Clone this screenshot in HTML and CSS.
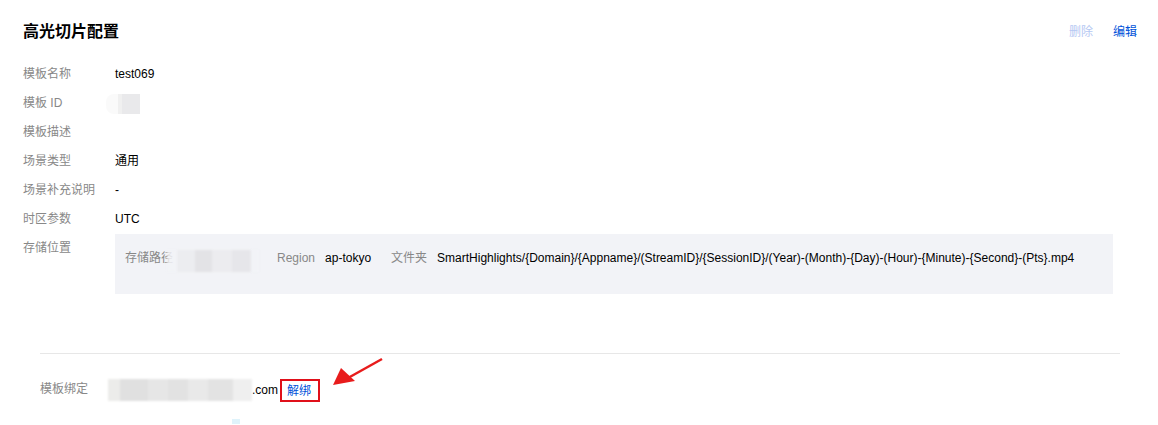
FILE: index.html
```html
<!DOCTYPE html>
<html lang="zh">
<head>
<meta charset="utf-8">
<link rel="stylesheet" href="styles.css">
</head>
<body>
<div class="page">
  <div class="header">
    <h2 class="title">高光切片配置</h2>
    <div class="actions">
      <a class="act disabled">删除</a>
      <a class="act">编辑</a>
    </div>
  </div>
  <div class="info">
    <div class="label">模板名称</div><div class="value">test069</div>
    <div class="label">模板 ID</div><div class="value"><span class="blur blur-id"></span></div>
    <div class="label">模板描述</div><div class="value"></div>
    <div class="label">场景类型</div><div class="value">通用</div>
    <div class="label">场景补充说明</div><div class="value">-</div>
    <div class="label">时区参数</div><div class="value">UTC</div>
    <div class="label">存储位置</div>
    <div class="value">
      <div class="storage">
        <span class="k">存储路径</span><span class="blur blur-path"></span>
        <span class="k k-region">Region</span><span class="v">ap-tokyo</span>
        <span class="k k-folder">文件夹</span><span class="v">SmartHighlights/{Domain}/{Appname}/(StreamID}/{SessionID}/(Year)-(Month)-{Day)-(Hour)-{Minute)-{Second}-(Pts}.mp4</span>
      </div>
    </div>
  </div>
  <div class="divider"></div>
  <div class="bind">
    <div class="label bind-label">模板绑定</div>
    <span class="blur blur-domain"></span><span class="v">.com</span>
    <a class="unbind">解绑</a>
  </div>
  <div class="frag"></div>
  <svg class="arrow" width="60" height="40" viewBox="0 0 60 40">
    <line x1="52" y1="2" x2="18" y2="21" stroke="#e81c1c" stroke-width="2.5"/>
    <polygon points="3,28 11,11 25,24" fill="#e81c1c"/>
  </svg>
</div>
</body>
</html>
```
FILE: styles.css
```css
* { box-sizing: border-box; }
html, body { margin: 0; padding: 0; background: #fff; }
body {
  font-family: "Liberation Sans", Arial, "Noto Sans CJK SC", sans-serif;
  font-size: 12px;
  color: #000;
}
.page {
  position: relative;
  width: 1158px;
  height: 425px;
  overflow: hidden;
  padding: 0 21px 0 23px;
}
.header {
  display: flex;
  justify-content: space-between;
  align-items: center;
  height: 60px;
}
.title {
  margin: 0;
  font-size: 16px;
  font-weight: bold;
  color: #000;
}
.actions {
  display: flex;
  gap: 20px;
}
.act {
  color: #0052d9;
  cursor: pointer;
}
.act.disabled { color: #b5c8f3; }
.info {
  display: grid;
  grid-template-columns: 92px 998px;
  grid-auto-rows: minmax(29px, auto);
}
.label {
  color: #888;
  line-height: 29px;
}
.value {
  line-height: 29px;
  color: #000;
}
.blur {
  display: inline-block;
  vertical-align: middle;
}
.blur-id {
  width: 34px;
  height: 20px;
  margin-left: -9px;
  background: linear-gradient(90deg, #fafafa 0 12px, #f0f0f0 12px 16px, #e9e9eb 16px);
  border-radius: 8px 0 0 8px;
  filter: blur(0.6px);
}
.storage {
  background: #f2f3f7;
  height: 60px;
  padding: 15px 10px;
  line-height: 18px;
  display: flex;
  white-space: nowrap;
}
.k { color: #888; }
.v { color: #000; }
.blur-path {
  width: 92px;
  height: 22px;
  margin: 1px 0 0 -6px;
  background: linear-gradient(90deg, rgba(242,243,247,0.85) 0 10px, #ecedf0 10px 28px, #e3e3e6 28px 45px, #ececef 45px 65px, #e6e6ea 65px 84px, rgba(242,243,247,0.6) 84px);
  filter: blur(1px);
}
.k-region { margin-left: 18px; margin-right: 10px; }
.k-folder { margin-left: 20px; margin-right: 10px; }
.divider {
  height: 1px;
  background: #e7e7e7;
  margin: 59px 17px 0 17px;
}
.bind {
  display: flex;
  align-items: center;
  margin: 23px 0 0 17px;
  height: 25px;
}
.bind-label { width: 68px; line-height: 25px; }
.blur-domain {
  width: 144px;
  height: 22px;
  margin-top: 1px;
  background: linear-gradient(90deg, #ececea 0 12px, #e0e0e0 12px 40px, #e6e6e6 40px 60px, #e2e2e2 60px 80px, #e9e9e9 80px 100px, #e3e3e3 100px 125px, #efefef 125px);
  filter: blur(0.8px);
}
.bind .v { line-height: 18px; }
.unbind {
  color: #0052d9;
  border: 2px solid #e0101a;
  padding: 1px 7px 0 5px;
  line-height: 18px;
  margin-left: 2px;
  margin-top: 1px;
}
.frag {
  width: 8px;
  height: 5px;
  background: #dff3fb;
  margin: 17px 0 0 209px;
}
.arrow {
  position: absolute;
  left: 330px;
  top: 357px;
}
```
